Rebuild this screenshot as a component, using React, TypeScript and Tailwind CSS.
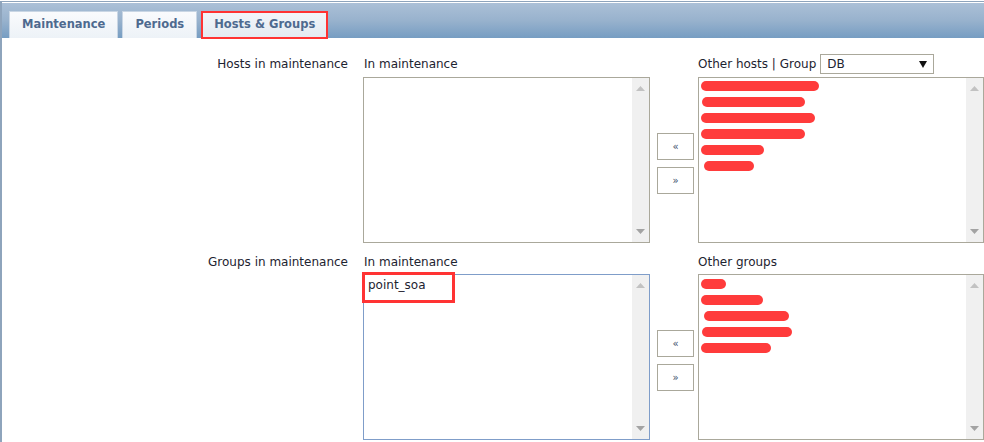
import React from "react";

const font = { fontFamily: '"DejaVu Sans", Verdana, sans-serif' };

function Scrollbar() {
  return (
    <div className="w-[17px] h-full bg-[#f0f0f0] flex flex-col items-center justify-between py-[8px]">
      <svg width="9" height="5" viewBox="0 0 9 5">
        <path d="M0 5 L4.5 0 L9 5 Z" fill="#c2c2c2" />
      </svg>
      <svg width="9" height="5" viewBox="0 0 9 5">
        <path d="M0 0 L9 0 L4.5 5 Z" fill="#a3a3a3" />
      </svg>
    </div>
  );
}

function Redacted({ w, ml = 0 }: { w: number; ml?: number }) {
  return (
    <div className="h-[16px] flex items-center">
      <span
        className="block h-[10px] rounded-full bg-[#ff3b3b]"
        style={{ width: w, marginLeft: ml }}
      />
    </div>
  );
}

function ListBox({
  focused,
  children,
}: {
  focused?: boolean;
  children?: React.ReactNode;
}) {
  return (
    <div
      className={`relative h-[166px] flex border ${
        focused ? "border-[#7f9dc9]" : "border-[#aaa89b]"
      } bg-white`}
    >
      <div className="flex-1 pl-[2px]">{children}</div>
      <Scrollbar />
    </div>
  );
}

function MoveButtons() {
  return (
    <div className="flex flex-col gap-[7px]">
      <button className="w-[37px] h-[27px] border border-[#aaa89b] bg-white text-[10px] text-[#3b4d6b] leading-none">
        «
      </button>
      <button className="w-[37px] h-[27px] border border-[#aaa89b] bg-white text-[10px] text-[#3b4d6b] leading-none">
        »
      </button>
    </div>
  );
}

export default function App() {
  const tabs = ["Maintenance", "Periods", "Hosts & Groups"];
  return (
    <div
      className="w-[984px] h-[442px] overflow-hidden bg-white text-[12px] text-[#1d2330]"
      style={font}
    >
      <div className="h-full border-l-2 border-t border-[#8ea4bc] mt-[1px] pt-[1px]">
        {/* Tab bar */}
        <div className="h-[35px] bg-gradient-to-b from-[#abc0d7] via-[#98b2cd] to-[#769dc2] flex items-end pl-[7px] gap-[4px]">
          {tabs.map((t, i) => (
            <div
              key={t}
              className={`relative h-[27px] flex items-center px-[12px] border border-b-0 border-[#c9d6e4] font-bold text-[11.5px] text-[#4e6a8f] ${
                i === 2
                  ? "bg-gradient-to-b from-[#f3f6f9] to-[#e3eaf2]"
                  : "bg-gradient-to-b from-[#fafbfd] to-[#edf2f7]"
              }`}
            >
              {t}
              {i === 2 && (
                <div className="absolute -left-[1px] -top-[1px] -right-[1px] -bottom-[1px] border-2 border-[#ff3333]" />
              )}
            </div>
          ))}
        </div>

        {/* Hosts row */}
        <div className="flex mt-[16px]">
          <div className="w-[346px] text-right h-[20px] flex items-center justify-end">
            Hosts in maintenance
          </div>
          <div className="ml-[15px] w-[287px]">
            <div className="h-[20px] flex items-center pl-[1px]">In maintenance</div>
            <div className="mt-[3px]">
              <ListBox />
            </div>
          </div>
          <div className="ml-[7px] pt-[79px]">
            <MoveButtons />
          </div>
          <div className="ml-[4px] w-[286px]">
            <div className="h-[20px] flex items-center gap-[4px]">
              <span>Other hosts | Group</span>
              <div className="w-[114px] h-[20px] border border-[#aaa89b] flex items-center justify-between pl-[6px] pr-[6px] text-[12px]">
                <span>DB</span>
                <svg width="8" height="7" viewBox="0 0 8 7">
                  <path d="M0 0 L8 0 L4 7 Z" fill="#111" />
                </svg>
              </div>
            </div>
            <div className="mt-[3px]">
              <ListBox>
                <Redacted w={118} />
                <Redacted w={103} ml={1} />
                <Redacted w={114} />
                <Redacted w={104} />
                <Redacted w={63} />
                <Redacted w={50} ml={3} />
              </ListBox>
            </div>
          </div>
        </div>

        {/* Groups row */}
        <div className="flex mt-[10px]">
          <div className="w-[346px] text-right h-[18px] flex items-center justify-end">
            Groups in maintenance
          </div>
          <div className="ml-[15px] w-[287px]">
            <div className="h-[18px] flex items-center pl-[1px]">In maintenance</div>
            <div className="mt-[3px]">
              <ListBox focused>
                <div className="relative inline-block pl-[2px] text-[12px] leading-[20px]">
                  point_soa
                  <div className="absolute -left-[4px] -top-[3px] w-[93px] h-[31px] border-[3px] border-[#ff3333]" />
                </div>
              </ListBox>
            </div>
          </div>
          <div className="ml-[7px] pt-[77px]">
            <MoveButtons />
          </div>
          <div className="ml-[4px] w-[286px]">
            <div className="h-[18px] flex items-center">Other groups</div>
            <div className="mt-[3px]">
              <ListBox>
                <div className="pt-[1px]">
                  <Redacted w={25} />
                  <Redacted w={62} />
                  <Redacted w={85} ml={3} />
                  <Redacted w={90} ml={1} />
                  <Redacted w={70} />
                </div>
              </ListBox>
            </div>
          </div>
        </div>
      </div>
    </div>
  );
}
